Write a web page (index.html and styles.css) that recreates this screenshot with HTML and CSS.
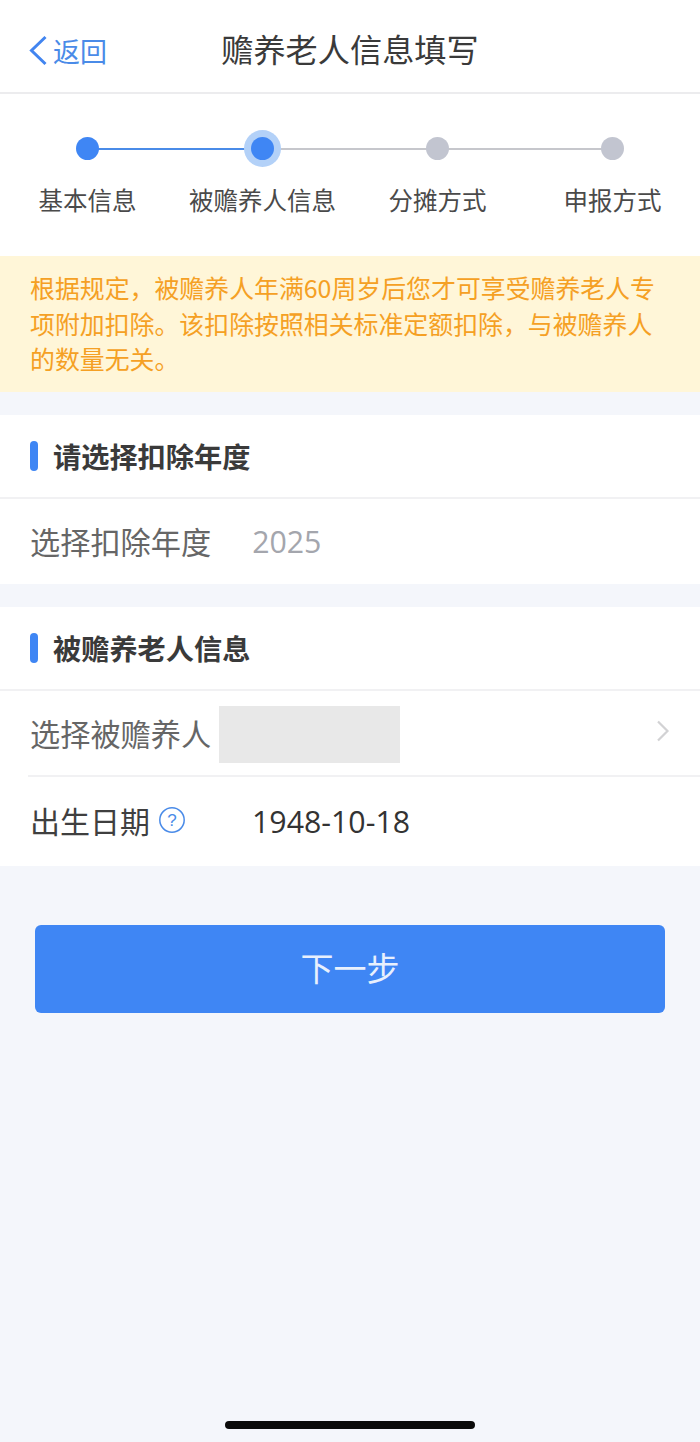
FILE: index.html
```html
<!DOCTYPE html>
<html lang="zh-CN">
<head>
  <meta charset="UTF-8">
  <meta name="viewport" content="width=device-width, initial-scale=1.0">
  <title>赡养老人信息填写</title>
  <link rel="stylesheet" href="styles.css">
</head>
<body>
  <div class="page">
    <!-- 顶部导航 -->
    <header class="nav">
      <a class="nav-back">
        <svg class="nav-back-icon" width="20" height="32" viewBox="0 0 20 32"><path d="M17.5 2 L3.5 15.5 L17.5 29" fill="none" stroke="#4285f0" stroke-width="3"/></svg>
        <span>返回</span>
      </a>
      <h1 class="nav-title">赡养老人信息填写</h1>
    </header>

    <!-- 步骤条 -->
    <section class="steps">
      <div class="step step-done">
        <div class="step-track"><span class="step-dot"></span></div>
        <div class="step-label">基本信息</div>
      </div>
      <div class="step step-current">
        <div class="step-track"><span class="step-dot"></span></div>
        <div class="step-label">被赡养人信息</div>
      </div>
      <div class="step">
        <div class="step-track"><span class="step-dot"></span></div>
        <div class="step-label">分摊方式</div>
      </div>
      <div class="step">
        <div class="step-track"><span class="step-dot"></span></div>
        <div class="step-label">申报方式</div>
      </div>
    </section>

    <p class="notice">根据规定，被赡养人年满60周岁后您才可享受赡养老人专项附加扣除。该扣除按照相关标准定额扣除，与被赡养人的数量无关。</p>

    <section class="card">
      <h2 class="card-title">请选择扣除年度</h2>
      <div class="row row-first row-year">
        <span class="row-label">选择扣除年度</span>
        <span class="row-value row-value-muted">2025</span>
      </div>
    </section>

    <section class="card">
      <h2 class="card-title">被赡养老人信息</h2>
      <div class="row row-first row-select">
        <span class="row-label">选择被赡养人</span>
        <span class="redacted"></span>
        <svg class="row-arrow" width="14" height="22" viewBox="0 0 14 22"><path d="M2 1.5 L11.5 11 L2 20.5" fill="none" stroke="#d2d2d4" stroke-width="2.2"/></svg>
      </div>
      <div class="row row-date">
        <span class="row-label row-label-dark">出生日期</span>
        <svg class="help-icon" width="28" height="28" viewBox="0 0 28 28"><circle cx="14" cy="14" r="12.2" fill="none" stroke="#4a8be8" stroke-width="1.5"/><text x="14" y="20" text-anchor="middle" font-size="17" font-family="Liberation Sans, sans-serif" fill="#4a8be8">?</text></svg>
        <span class="row-value">1948-10-18</span>
      </div>
    </section>

    <button class="next-btn">下一步</button>

    <div class="home-bar"></div>
  </div>
</body>
</html>
```

FILE: styles.css
```css
* {
  box-sizing: border-box;
}

body {
  margin: 0;
  font-family: "Noto Sans CJK SC", "Noto Sans", sans-serif;
  background: #f4f6fb;
  color: #333;
}

.page {
  position: relative;
  height: 1442px;
  overflow: hidden;
}

/* 顶部导航 */
.nav {
  height: 94px;
  background: #fff;
  border-bottom: 2px solid #ececee;
  display: flex;
  align-items: center;
  justify-content: center;
  position: relative;
  padding-top: 4px;
}

.nav-title {
  margin: 0;
  font-size: 32.2px;
  font-weight: 400;
  line-height: 44px;
  color: #3a3a3a;
}

.nav-back {
  position: absolute;
  left: 28px;
  top: 35px;
  display: flex;
  align-items: center;
  gap: 5px;
  font-size: 27px;
  line-height: 32px;
  color: #4a8be8;
}

/* 步骤条 */
.steps {
  background: #fff;
  display: flex;
  height: 162px;
  padding-top: 34px;
}

.step {
  flex: 0 0 175px;
  text-align: center;
}

.step-track {
  position: relative;
  height: 40px;
  display: flex;
  align-items: center;
  justify-content: center;
}

.step-track::after {
  content: "";
  position: absolute;
  left: 50%;
  width: 175px;
  top: 20px;
  height: 2px;
  background: #c6c7cc;
}

.step-done .step-track::after {
  background: #4a8be8;
}

.step:last-child .step-track::after {
  display: none;
}

.step-dot {
  position: relative;
  z-index: 1;
  width: 23px;
  height: 23px;
  border-radius: 50%;
  background: #c2c5d0;
}

.step-done .step-dot,
.step-current .step-dot {
  background: #3f86f4;
}

.step-current .step-dot {
  box-shadow: 0 0 0 7px #b3d1f8;
}

.step-label {
  margin-top: 15px;
  font-size: 24.5px;
  line-height: 34px;
  color: #4a4a4a;
}

/* 提示 */
.notice {
  margin: 0;
  height: 136px;
  padding: 14px 30px 0;
  background: #fff6d8;
  color: #f5a024;
  font-size: 24.9px;
  line-height: 35.5px;
}

/* 卡片 */
.card {
  margin-top: 23px;
  background: #fff;
}

.card-title {
  margin: 0;
  height: 82px;
  padding-left: 53px;
  position: relative;
  font-size: 28.2px;
  font-weight: 700;
  line-height: 82px;
  color: #3a3a3a;
}

.card-title::before {
  content: "";
  position: absolute;
  left: 30px;
  top: 26px;
  width: 8px;
  height: 30px;
  border-radius: 4px;
  background: #3f86f4;
}

.row {
  display: flex;
  align-items: center;
  padding-left: 30px;
}

.row-first {
  height: 87px;
  border-top: 2px solid #f1f1f3;
}

.row-year {
  padding-bottom: 2px;
}

.row-label {
  font-size: 30.2px;
  line-height: 42px;
  color: #666;
}

.row-label-dark {
  color: #3f3f3f;
}

.row-value {
  margin-left: 41px;
  margin-top: 2px;
  font-family: "Open Sans", "Noto Sans", sans-serif;
  font-size: 30.3px;
  line-height: 42px;
  color: #333;
}

.row-value-muted {
  color: #a4a6ad;
}

.row-select {
  height: 86px;
}

.redacted {
  width: 181px;
  height: 57px;
  margin-left: 8px;
  margin-top: 3px;
  background: #e8e8e8;
}

.row-arrow {
  margin-left: auto;
  margin-right: 30px;
  margin-bottom: 4px;
}

.row-date {
  height: 91px;
  margin-left: 28px;
  padding-left: 2px;
  padding-bottom: 3px;
  border-top: 2px solid #f1f1f3;
}

.row-date .row-label {
  font-size: 30px;
}

.help-icon {
  margin-left: 8px;
}

.row-date .row-value {
  margin-left: 66px;
  margin-top: 4px;
}

/* 按钮 */
.next-btn {
  display: block;
  width: 630px;
  height: 88px;
  margin: 59px auto 0;
  padding: 0 0 4px;
  border: 0;
  border-radius: 6px;
  background: #3f86f4;
  color: #e8f0fd;
  font-family: inherit;
  font-size: 33px;
}

.home-bar {
  position: absolute;
  left: 225px;
  bottom: 13px;
  width: 250px;
  height: 8px;
  border-radius: 4px;
  background: #0a0a0a;
}
```
